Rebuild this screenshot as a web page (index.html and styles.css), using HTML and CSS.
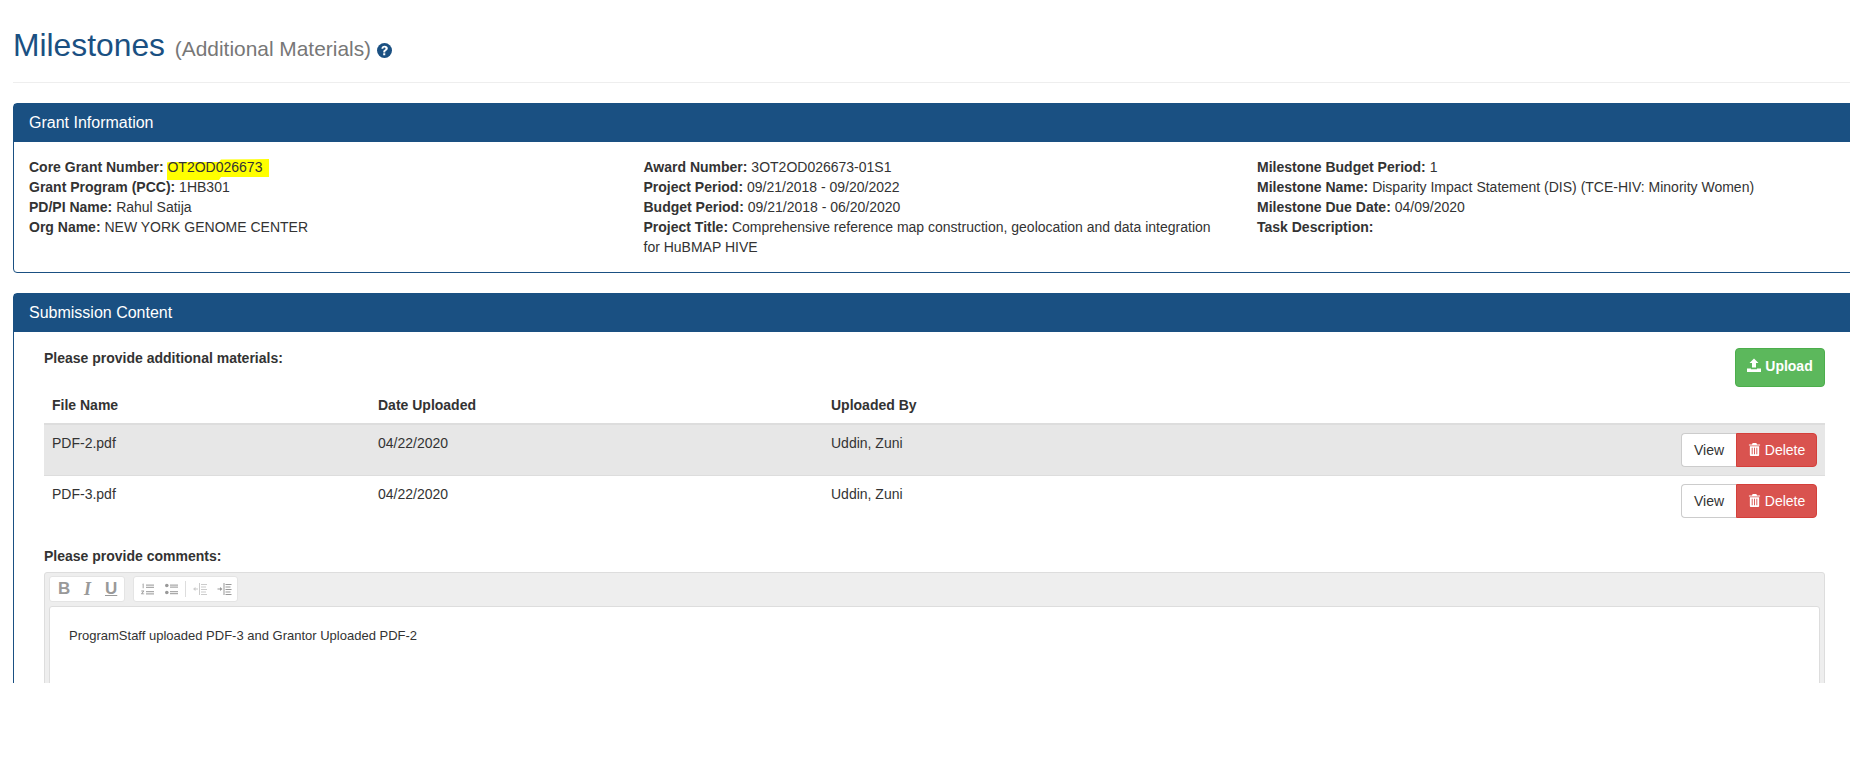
FILE: index.html
```html
<!DOCTYPE html>
<html lang="en">
<head>
<meta charset="utf-8">
<title>Milestones</title>
<link rel="stylesheet" href="styles.css">
</head>
<body>
<div class="page">
  <header class="page-header">
    <h1>Milestones <small>(Additional Materials)</small>
      <svg class="help" viewBox="0 0 16 16" aria-hidden="true"><circle cx="8" cy="8" r="8" fill="#1a5082"/><path d="M4.700 6C4.800 4 6.200 2.900 8.100 2.900c2 0 3.400 1.100 3.400 2.800 0 1.300-.7 2-1.700 2.600-.8.500-1 .8-1 1.500v.2H6.700v-.5c0-1.100.5-1.700 1.300-2.200.8-.5 1.100-.9 1.100-1.400 0-.6-.4-1-1.100-1-.7 0-1.200.5-1.300 1.200zM6.600 11h2.200v2.100H6.600z" fill="#fff"/></svg>
    </h1>
  </header>

  <section class="panel panel-grant">
    <h2 class="panel-heading">Grant Information</h2>
    <div class="panel-body info-grid">
      <div>
        <div class="info-line"><b>Core Grant Number:</b> <span class="marked"><svg class="marker" viewBox="0 0 102 21" preserveAspectRatio="none" aria-hidden="true"><path d="M0 3.500L3 3L52 3L54 0.500L102 0L102 18L54 18L52 21L0 21z" fill="#ff0"/></svg><span class="marked-text">OT2OD026673</span></span></div>
        <div class="info-line"><b>Grant Program (PCC):</b> 1HB301</div>
        <div class="info-line"><b>PD/PI Name:</b> Rahul Satija</div>
        <div class="info-line"><b>Org Name:</b> NEW YORK GENOME CENTER</div>
      </div>
      <div>
        <div class="info-line"><b>Award Number:</b> 3OT2OD026673-01S1</div>
        <div class="info-line"><b>Project Period:</b> 09/21/2018 - 09/20/2022</div>
        <div class="info-line"><b>Budget Period:</b> 09/21/2018 - 06/20/2020</div>
        <div class="info-line"><b>Project Title:</b> Comprehensive reference map construction, geolocation and data integration for HuBMAP HIVE</div>
      </div>
      <div>
        <div class="info-line"><b>Milestone Budget Period:</b> 1</div>
        <div class="info-line"><b>Milestone Name:</b> Disparity Impact Statement (DIS) (TCE-HIV: Minority Women)</div>
        <div class="info-line"><b>Milestone Due Date:</b> 04/09/2020</div>
        <div class="info-line"><b>Task Description:</b></div>
      </div>
    </div>
  </section>

  <section class="panel panel-submission">
    <h2 class="panel-heading">Submission Content</h2>
    <div class="panel-body">
      <div class="materials-bar">
        <b>Please provide additional materials:</b>
        <button class="btn btn-upload" type="button">
          <svg class="ico ico-upload" viewBox="0 0 14 14" aria-hidden="true"><path d="M7 0.500L11.500 5H9v4.500H5V5H2.500zM0 10.500h4v.8h6v-.8h4V14H0z" fill="currentColor"/></svg>Upload
        </button>
      </div>
      <table class="files">
        <thead>
          <tr><th class="col-name">File Name</th><th class="col-date">Date Uploaded</th><th class="col-by">Uploaded By</th><th></th></tr>
        </thead>
        <tbody>
          <tr class="row-active">
            <td>PDF-2.pdf</td><td>04/22/2020</td><td>Uddin, Zuni</td>
            <td class="actions"><div class="btn-group"><button class="btn btn-view" type="button">View</button><button class="btn btn-delete" type="button"><svg class="ico" viewBox="0 0 12 14" aria-hidden="true"><path d="M4 0h4l.7 1.500H12v1.200H0V1.500h3.300zM1 3.500h10V13a1 1 0 0 1-1 1H2a1 1 0 0 1-1-1zM3 5v7h1V5zm2.500 0v7h1V5zM8 5v7h1V5z" fill="currentColor" fill-rule="evenodd"/></svg>Delete</button></div></td>
          </tr>
          <tr>
            <td>PDF-3.pdf</td><td>04/22/2020</td><td>Uddin, Zuni</td>
            <td class="actions"><div class="btn-group"><button class="btn btn-view" type="button">View</button><button class="btn btn-delete" type="button"><svg class="ico" viewBox="0 0 12 14" aria-hidden="true"><path d="M4 0h4l.7 1.500H12v1.200H0V1.500h3.300zM1 3.500h10V13a1 1 0 0 1-1 1H2a1 1 0 0 1-1-1zM3 5v7h1V5zm2.500 0v7h1V5zM8 5v7h1V5z" fill="currentColor" fill-rule="evenodd"/></svg>Delete</button></div></td>
          </tr>
        </tbody>
      </table>
      <div class="comments-label"><b>Please provide comments:</b></div>
      <div class="editor">
        <div class="toolbar">
          <div class="tool-group tool-format">
            <span class="tool tool-b">B</span><span class="tool tool-i">I</span><span class="tool tool-u">U</span>
          </div>
          <div class="tool-group tool-lists">
            <svg class="tool-ico ico-ol" viewBox="0 0 13 12" aria-hidden="true"><path d="M5 1.500h8v1.200H5zM5 3.800h8V5H5zM5 8h8v1.200H5zM5 10.300h8v1.200H5z" fill="#aaa"/><path d="M1.200 1L2.600.4v4.800h-.9V1.600zM.3 7.500h2.800v.8L1.400 10.400h1.800v.9H.2v-.8l1.800-2.100H.3z" fill="#999"/></svg>
            <svg class="tool-ico ico-ul" viewBox="0 0 13 12" aria-hidden="true"><circle cx="1.800" cy="2.500" r="1.800" fill="#999"/><circle cx="1.800" cy="9.500" r="1.800" fill="#999"/><path d="M5 1.500h8v1.200H5zM5 3.500h8v1.200H5zM5 8h8v1.200H5zM5 10h8v1.200H5z" fill="#aaa"/></svg>
            <span class="tool-sep"></span>
            <svg class="tool-ico ico-out" viewBox="0 0 14 12" aria-hidden="true"><path d="M6 0h1v12H6zM8 1h6v1H8zM8 3.500h5v1H8zM8 6h6v1H8zM8 8.500h5v1H8zM8 11h6v1H8z" fill="#ccc"/><path d="M0 6l2.500-2v1.500H5v1H2.500V8z" fill="#ccc"/></svg>
            <svg class="tool-ico ico-in" viewBox="0 0 14 12" aria-hidden="true"><path d="M6 0h1v12H6zM8 1h6v1H8zM8 3.500h5v1H8zM8 6h6v1H8zM8 8.500h5v1H8zM8 11h6v1H8z" fill="#999"/><path d="M5 6L2.500 4v1.500H0v1h2.500V8z" fill="#999"/></svg>
          </div>
        </div>
        <div class="editor-content">ProgramStaff uploaded PDF-3 and Grantor Uploaded PDF-2</div>
      </div>
    </div>
  </section>
</div>
</body>
</html>
```

FILE: styles.css
```css
* { box-sizing: border-box; }
html, body { margin: 0; background: #fff; }
body {
  font-family: "Liberation Sans", Arial, sans-serif;
  font-size: 14px;
  line-height: 20px;
  color: #333;
}
.page {
  width: 1850px;
  height: 683px;
  padding-left: 13px;
  overflow: hidden;
}
.page-header {
  height: 83px;
  padding-top: 28px;
  border-bottom: 1px solid #eee;
  margin-bottom: 20px;
}
h1 {
  margin: 0;
  font-size: 31.8px;
  line-height: 35px;
  font-weight: 400;
  color: #1a5082;
}
h1 small { font-size: 20.9px; color: #777; margin-left: 1px; }
.help { width: 15px; height: 15px; margin-left: -3px; vertical-align: -2px; }
.panel {
  width: 1860px;
  border: 1px solid #1a5082;
  border-radius: 4px;
  margin-bottom: 20px;
}
.panel-heading {
  margin: 0;
  background: #1a5082;
  color: #fff;
  font-size: 16px;
  font-weight: 400;
  line-height: 19px;
  padding: 9px 15px 10px;
}
.panel-grant .panel-body { padding: 15px 15px 15px; }
.info-grid {
  display: grid;
  grid-template-columns: 614.5px 613.5px 560px;
}
.info-grid > div { padding-right: 30px; }
.marked { position: relative; display: inline-block; }
.marker { position: absolute; left: 0; top: 2px; width: 102px; height: 21px; }
.marked-text { position: relative; }
.panel-submission .panel-body { padding: 16px 30px 15px; width: 1841px; }
.materials-bar {
  display: flex;
  justify-content: space-between;
  align-items: flex-start;
  height: 39px;
}
.btn {
  font: inherit;
  border: 1px solid transparent;
  border-radius: 4px;
  padding: 6px 12px;
  cursor: pointer;
}
.ico { width: 13px; height: 13px; margin-right: 4px; vertical-align: -1px; }
.ico-upload { width: 14px; height: 14px; }
.btn-upload {
  width: 90px;
  height: 39px;
  padding: 0 0 3px;
  background: #5cb85c;
  border-color: #4cae4c;
  color: #fff;
  font-weight: 700;
}
.files { width: 100%; border-collapse: collapse; table-layout: fixed; }
.files th, .files td { padding: 8px; text-align: left; vertical-align: top; }
.files th { border-bottom: 2px solid #ddd; font-weight: 700; }
.files td { border-top: 1px solid #ddd; }
.files tbody tr:first-child td { border-top: 0; }
.col-name { width: 326px; }
.col-date { width: 453px; }
.col-by { width: 500px; }
.row-active td { background: #e7e7e7; }
.files .actions { text-align: right; }
.btn-group { display: inline-flex; }
.btn-view {
  width: 55px;
  height: 34px;
  padding: 0;
  background: #fff;
  border-color: #ccc;
  border-radius: 4px 0 0 4px;
  border-right: 0;
  color: #333;
}
.btn-delete {
  width: 81px;
  height: 34px;
  padding: 0;
  background: #d9534f;
  border-color: #d43f3a;
  border-radius: 0 4px 4px 0;
  color: #fff;
}
.comments-label { margin-top: 20px; margin-bottom: 6px; }
.editor {
  height: 200px;
  border: 1px solid #ddd;
  border-radius: 3px;
  background: #eee;
  padding: 3px 4px 4px;
}
.toolbar { display: flex; gap: 8px; margin-bottom: 4px; }
.tool-group {
  display: flex;
  align-items: center;
  height: 26px;
  background: #fff;
  border: 1px solid #e4e4e4;
  border-radius: 3px;
}
.tool-format { width: 76px; padding: 0 7px 0 8px; justify-content: space-between; }
.tool-lists { width: 105px; padding-left: 7px; }
.tool {
  width: 12px;
  text-align: center;
  color: #999;
  font-size: 17px;
  font-weight: 700;
}
.tool-i { font-style: italic; font-family: "Liberation Serif", serif; font-size: 18px; }
.tool-u { text-decoration: underline; }
.tool-ico { height: 12px; flex: none; }
.ico-ol { width: 13px; }
.ico-ul { width: 13px; margin-left: 11px; }
.tool-sep { width: 1px; height: 16px; background: #ddd; margin: 0 7px; }
.ico-out { width: 14px; }
.ico-in { width: 15px; margin-left: 10px; }
.editor-content {
  height: 150px;
  background: #fff;
  border: 1px solid #ddd;
  border-radius: 3px;
  padding: 19px 19px;
  font-size: 13px;
}
```
